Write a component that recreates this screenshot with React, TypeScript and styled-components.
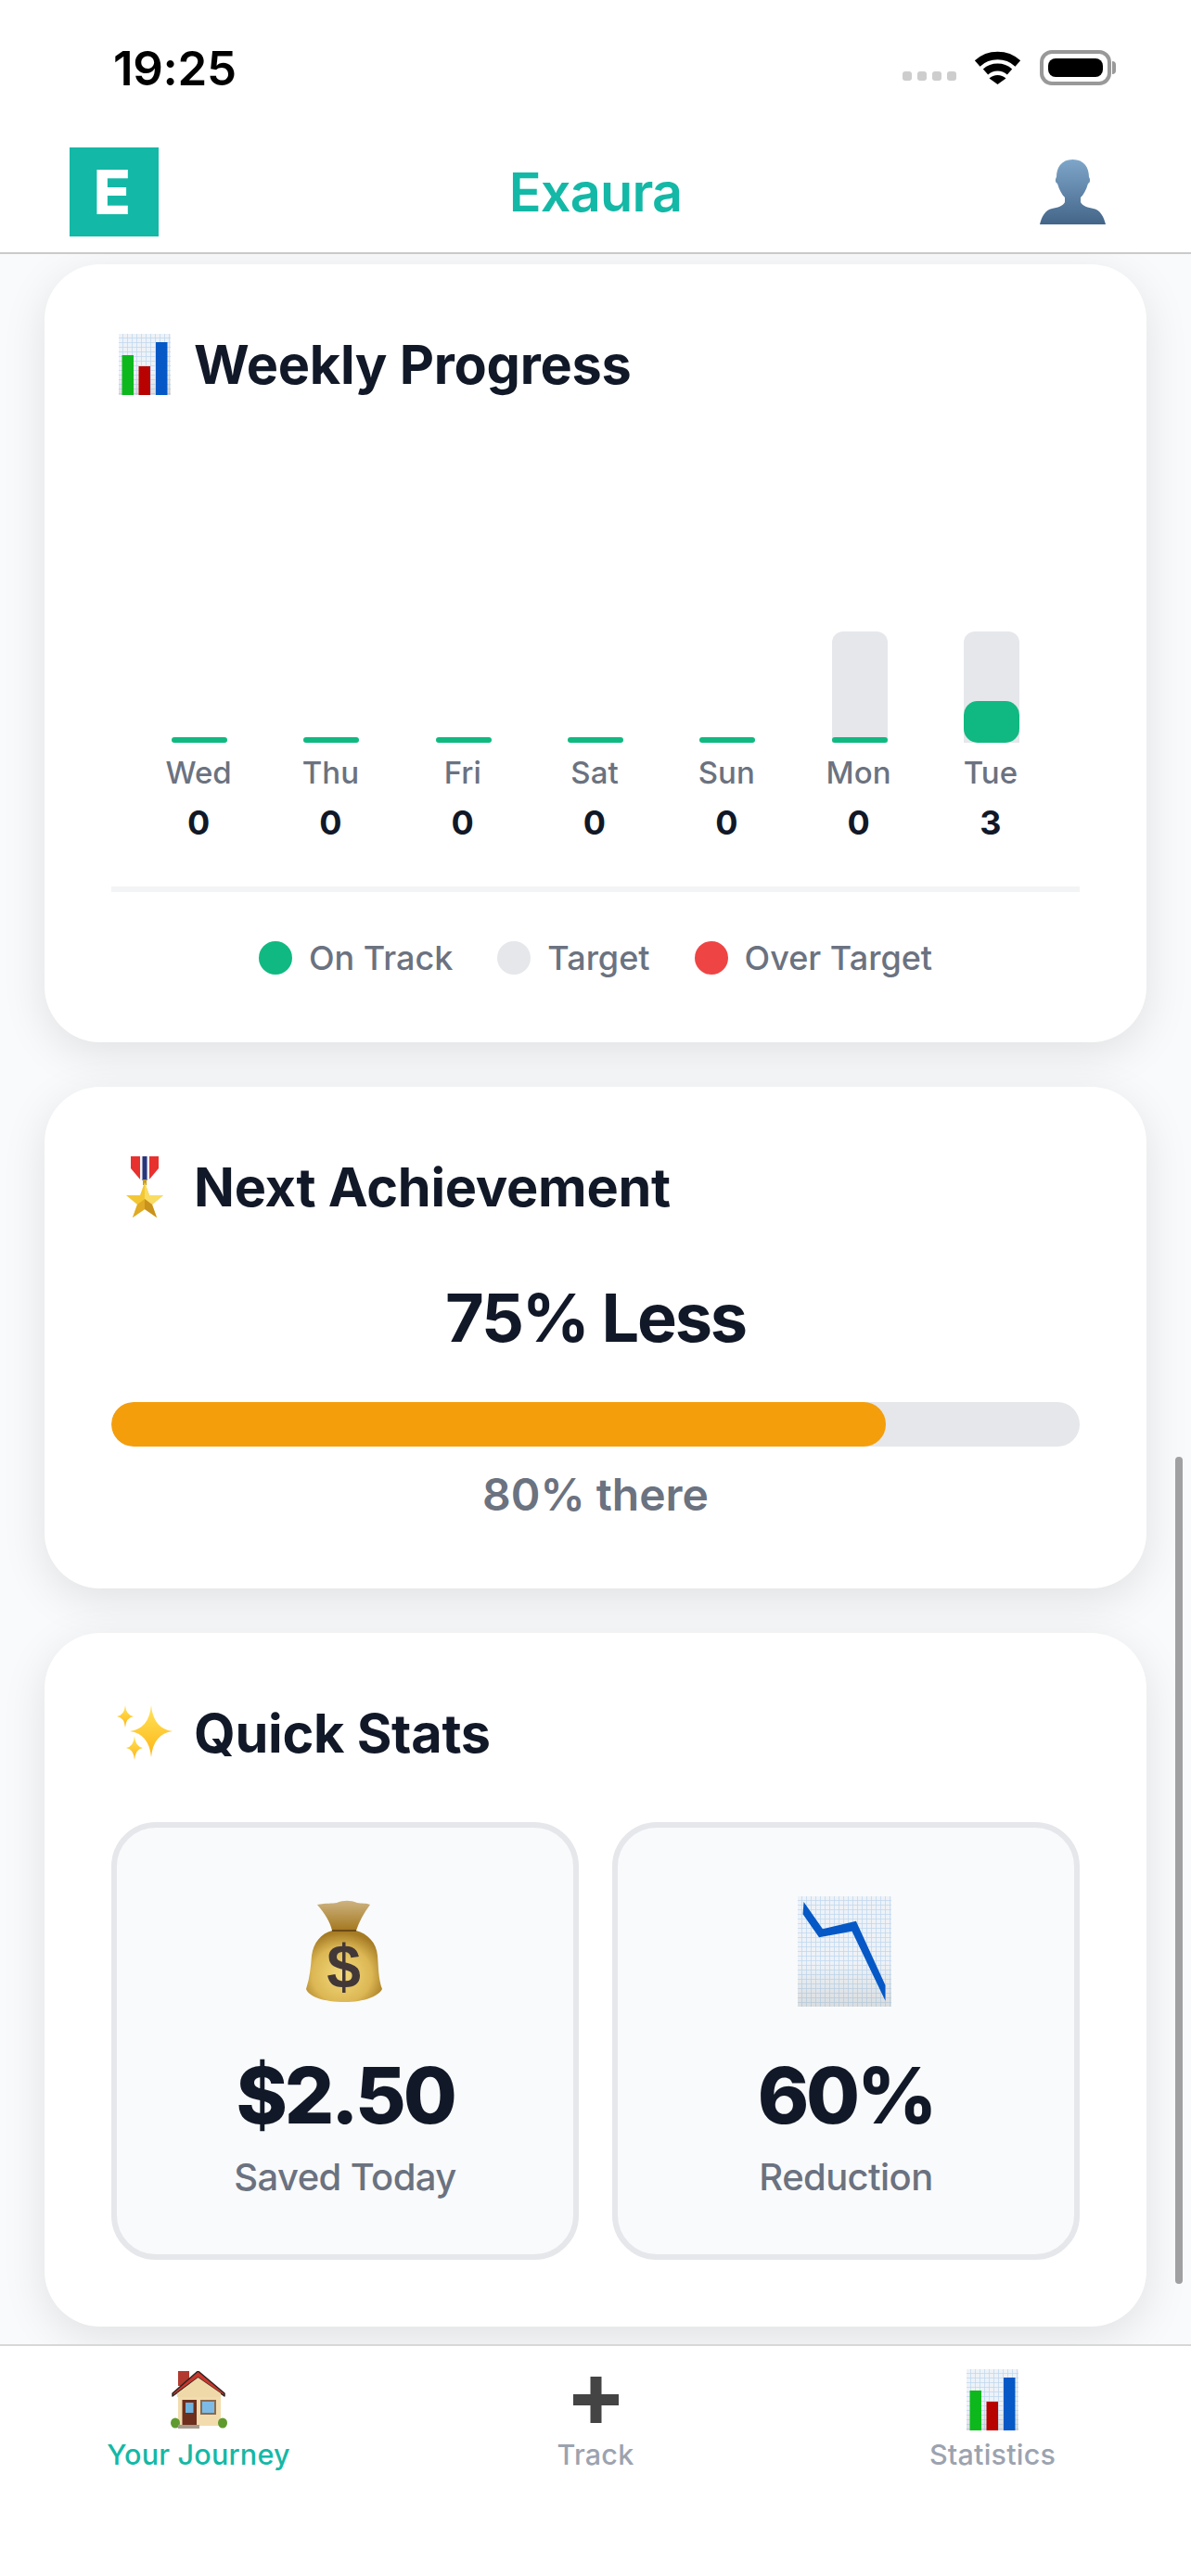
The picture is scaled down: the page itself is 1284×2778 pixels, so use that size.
import styled, { createGlobalStyle } from "styled-components";

const GlobalStyle = createGlobalStyle`
  html, body {
    margin: 0;
    padding: 0;
    background: #ffffff;
  }

  * {
    box-sizing: border-box;
  }
`;

const Page = styled.div`
  width: 1284px;
  height: 2778px;
  display: flex;
  flex-direction: column;
  overflow: hidden;
  background: #ffffff;
  font-family: Inter, "Noto Sans", sans-serif;
`;

const StatusBar = styled.div`
  height: 146px;
  padding: 0 86px 0 122px;
  display: flex;
  align-items: center;
  justify-content: space-between;
`;

const Clock = styled.div`
  font-size: 51px;
  font-weight: 600;
  letter-spacing: -0.3px;
  color: #000000;
`;

const StatusIcons = styled.div`
  display: flex;
  align-items: center;
`;

const Dots = styled.div`
  display: flex;
  gap: 6px;
  margin: 18px 19px 0 0;

  > span {
    width: 10px;
    height: 10px;
    border-radius: 3px;
    background: #cdcdcd;
  }
`;

const Battery = styled.div`
  width: 77px;
  height: 38px;
  margin-left: 20px;
  padding: 5px;
  border: 4px solid #999999;
  border-radius: 13px;
  position: relative;

  &::before {
    content: "";
    display: block;
    height: 100%;
    background: #000000;
    border-radius: 8px;
  }

  &::after {
    content: "";
    position: absolute;
    top: 8px;
    right: -9px;
    width: 4px;
    height: 14px;
    background: #999999;
    border-radius: 0 4px 4px 0;
  }
`;

const Header = styled.header`
  padding: 13px 75px 17px;
  display: grid;
  grid-template-columns: 1fr auto 1fr;
  align-items: center;
  background: #ffffff;
  border-bottom: 2px solid #cacaca;
`;

const Logo = styled.div`
  width: 96px;
  height: 96px;
  padding-right: 4px;
  background: #14b8a6;
  color: #ffffff;
  font-size: 66px;
  font-weight: 800;
  line-height: 96px;
  text-align: center;
`;

const Brand = styled.div`
  font-size: 57.6px;
  font-weight: 600;
  letter-spacing: -0.8px;
  color: #14b8a6;
`;

const Avatar = styled.div`
  justify-self: end;
  margin-right: 17px;
  display: flex;
`;

const Main = styled.main`
  flex: 1;
  min-height: 0;
  padding: 11px 48px 0;
  display: flex;
  flex-direction: column;
  gap: 48px;
  overflow: hidden;
  position: relative;
  background: #f9fafb;
`;

const Scrollbar = styled.div`
  position: absolute;
  top: 1297px;
  right: 9px;
  width: 8px;
  height: 892px;
  border-radius: 4px;
  background: #a0a0a3;
`;

const Card = styled.section`
  padding: 72px;
  background: #ffffff;
  border-radius: 60px;
  box-shadow: 0 12px 48px rgba(0, 0, 0, 0.1);
`;

const CardTitle = styled.h2`
  margin: 0;
  height: 72px;
  display: flex;
  align-items: center;
  font-size: 57.6px;
  font-weight: 700;
  letter-spacing: -0.25px;
  color: #111827;
`;

const TitleIcon = styled.span`
  width: 72px;
  margin-right: 17px;
  display: flex;
  justify-content: center;
`;

const Chart = styled.div`
  margin-top: 252px;
  padding: 0 24px 47px;
  display: grid;
  grid-template-columns: repeat(7, 1fr);
  border-bottom: 6px solid #f3f4f6;
`;

const Day = styled.div`
  display: flex;
  flex-direction: column;
  align-items: center;
`;

const Track = styled.div<{ $empty: boolean }>`
  width: 60px;
  height: 120px;
  display: flex;
  align-items: flex-end;
  border-radius: 12px 12px 0 0;
  background: ${(p) => (p.$empty ? "transparent" : "#e5e7eb")};
`;

const Fill = styled.div<{ $tall: boolean }>`
  width: 100%;
  background: #10b981;
  border-radius: ${(p) => (p.$tall ? "15px" : "3px")};
`;

const DayName = styled.div`
  margin: 12px 2px 0 0;
  font-size: 33px;
  line-height: 40px;
  font-weight: 500;
  color: #6b7280;
`;

const DayValue = styled.div`
  margin: 12px 2px 0 0;
  font-size: 36px;
  line-height: 44px;
  font-weight: 700;
  color: #111827;
`;

const Legend = styled.div`
  padding-top: 52px;
  display: flex;
  justify-content: center;
  gap: 48px;
`;

const LegendItem = styled.div`
  display: flex;
  align-items: center;
  gap: 18px;
  font-size: 36px;
  line-height: 38px;
  font-weight: 500;
  color: #6b7280;
`;

const Swatch = styled.span<{ $color: string }>`
  width: 36px;
  height: 36px;
  border-radius: 50%;
  background: ${(p) => p.$color};
`;

const Goal = styled.div`
  margin-top: 60px;
  font-size: 72px;
  line-height: 90px;
  font-weight: 700;
  letter-spacing: -2.2px;
  text-align: center;
  color: #111827;
`;

const Progress = styled.div`
  margin-top: 46px;
  height: 48px;
  border-radius: 24px;
  background: #e5e7eb;
  overflow: hidden;
`;

const ProgressFill = styled.div`
  height: 100%;
  background: #f59e0b;
  border-radius: 24px;
`;

const ProgressText = styled.div`
  margin-top: 23px;
  font-size: 48px;
  line-height: 58px;
  font-weight: 600;
  text-align: center;
  color: #6b7280;
`;

const StatGrid = styled.div`
  margin-top: 60px;
  display: grid;
  grid-template-columns: 1fr 1fr;
  gap: 36px;
`;

const StatBox = styled.div`
  height: 472px;
  padding-top: 73px;
  display: flex;
  flex-direction: column;
  align-items: center;
  background: #f9fafb;
  border: 6px solid #e5e7eb;
  border-radius: 48px;
`;

const StatIcon = styled.div`
  height: 120px;
  margin-right: 3px;
  display: flex;
  align-items: center;
`;

const StatValue = styled.div`
  margin-top: 45px;
  font-size: 84px;
  line-height: 102px;
  font-weight: 800;
  letter-spacing: -3.2px;
  color: #111827;
`;

const StatLabel = styled.div`
  margin-top: 13px;
  font-size: 40px;
  line-height: 48px;
  font-weight: 500;
  letter-spacing: -0.6px;
  color: #6b7280;
`;

const BottomNav = styled.nav`
  height: 250px;
  padding-top: 25px;
  display: grid;
  grid-template-columns: repeat(3, 1fr);
  align-items: start;
  background: #ffffff;
  border-top: 2px solid #d8d8d8;
`;

const NavItem = styled.div<{ $active?: boolean }>`
  display: flex;
  flex-direction: column;
  align-items: center;
  font-size: 30.5px;
  line-height: 36px;
  font-weight: 500;
  letter-spacing: 0.2px;
  color: ${(p) => (p.$active ? "#14b8a6" : "#9ca3af")};
`;

const NavIcon = styled.div`
  height: 66px;
  margin-bottom: 8px;
  display: flex;
  align-items: center;
`;

const Wifi = () => (
  <svg width="51" height="37" viewBox="0 0 51 37">
    <path d="M3.7 13.5A32.5 32.5 0 0 1 47.3 13.5" fill="none" stroke="#000" strokeWidth="8.5" />
    <path d="M12.5 22.5A19.5 19.5 0 0 1 38.5 22.5" fill="none" stroke="#000" strokeWidth="8" />
    <path d="M16.5 30.5A13 13 0 0 1 34.5 30.5L25.5 37Z" fill="#000" transform="translate(0 -1)" />
  </svg>
);

const Person = () => (
  <svg width="71" height="70" viewBox="0 0 71 70">
    <defs>
      <linearGradient id="bust" x1="0" y1="0" x2="0" y2="1">
        <stop offset="0" stopColor="#7ea6c9" />
        <stop offset="1" stopColor="#436588" />
      </linearGradient>
    </defs>
    <path
      fill="url(#bust)"
      d="M35.5 0C48 0 53 9 53 19C55 22 54 25 52 26C50 33 47 38 44 41L44 46C46 50 52 52 58 53C65 54 69 62 71 70L0 70C2 62 6 54 13 53C19 52 25 50 27 46L27 41C24 38 21 33 19 26C17 25 16 22 18 19C18 9 23 0 35.5 0Z"
    />
  </svg>
);

const GraphPaper = ({ id, w, h }: { id: string; w: number; h: number }) => (
  <>
    <defs>
      <pattern id={id} width="5" height="5" patternUnits="userSpaceOnUse">
        <rect width="5" height="5" fill="#eef2f7" />
        <path d="M5 0V5M0 5H5" stroke="#bfd8ef" strokeWidth="1.5" />
      </pattern>
      <linearGradient id={`${id}Fade`} x1="0" y1="0" x2="0" y2="1">
        <stop offset="0.6" stopColor="#8a8a80" stopOpacity="0" />
        <stop offset="1" stopColor="#8a8a80" stopOpacity="0.2" />
      </linearGradient>
    </defs>
    <rect width={w} height={h} fill={`url(#${id})`} />
    <rect width={w} height={h} fill={`url(#${id}Fade)`} />
  </>
);

const BarsEmoji = ({ id }: { id: string }) => (
  <svg width="56" height="66" viewBox="0 0 56 66">
    <GraphPaper id={id} w={56} h={66} />
    <rect x="3.5" y="23" width="12.5" height="43" fill="#0db81d" />
    <rect x="21.5" y="35" width="12.5" height="31" fill="#b80202" />
    <rect x="40" y="9" width="12.5" height="57" fill="#0558c6" />
  </svg>
);

const MedalEmoji = () => (
  <svg width="40" height="66" viewBox="0 0 40 66">
    <path d="M5 0H35V13L24 26H16L5 13Z" fill="#e8302f" />
    <rect x="15" y="0" width="10" height="26" fill="#f4f4f4" />
    <rect x="17.5" y="0" width="5" height="26" fill="#27357a" />
    <rect x="18" y="25" width="4" height="6" fill="#c99a1e" />
    <path d="M20 28L25 42L40 42L28 52L33 66L20 57L7 66L12 52L0 42L15 42Z" fill="#f3c734" />
    <path d="M20 28L25 42L40 42L28 52L20 46Z" fill="#f9dc63" />
    <path d="M20 46L28 52L33 66L20 57Z" fill="#c9921c" />
    <path d="M20 46L20 57L7 66L12 52Z" fill="#e0aa25" />
  </svg>
);

const SparkPath = ({ cx, cy, rx, ry }: { cx: number; cy: number; rx: number; ry: number }) => (
  <path
    fill="url(#spark)"
    d={`M${cx} ${cy - ry}Q${cx + rx * 0.1} ${cy - ry * 0.1} ${cx + rx} ${cy}Q${cx + rx * 0.1} ${cy + ry * 0.1} ${cx} ${cy + ry}Q${cx - rx * 0.1} ${cy + ry * 0.1} ${cx - rx} ${cy}Q${cx - rx * 0.1} ${cy - ry * 0.1} ${cx} ${cy - ry}Z`}
  />
);

const SparklesEmoji = () => (
  <svg width="60" height="60" viewBox="0 0 60 60">
    <defs>
      <linearGradient id="spark" x1="0" y1="0" x2="0" y2="1">
        <stop offset="0" stopColor="#ffe45c" />
        <stop offset="1" stopColor="#fdb515" />
      </linearGradient>
    </defs>
    <SparkPath cx={37} cy={28} rx={23} ry={28} />
    <SparkPath cx={9} cy={12} rx={9} ry={12} />
    <SparkPath cx={19} cy={46} rx={9} ry={13} />
  </svg>
);

const MoneyBagEmoji = () => (
  <svg width="82" height="110" viewBox="0 0 82 110">
    <defs>
      <linearGradient id="neck" x1="0" y1="0" x2="0" y2="1">
        <stop offset="0" stopColor="#cdb381" />
        <stop offset="1" stopColor="#a4781e" />
      </linearGradient>
      <radialGradient id="sack" cx="0.47" cy="0.62" r="0.6">
        <stop offset="0" stopColor="#f3da7c" />
        <stop offset="0.65" stopColor="#dcb754" />
        <stop offset="1" stopColor="#a57b24" />
      </radialGradient>
    </defs>
    <path d="M12 5C22 3 28 4 33 3C40 0 48 0 55 3C60 4 65 3 69 5C62 14 57 24 54 33H28C26 24 20 14 12 5Z" fill="url(#neck)" />
    <path d="M28 33C16 36 8 46 6 60C5 72 4 84 0 96C3 104 18 110 42 110C62 110 78 104 82 96C78 86 78 72 77 60C76 46 66 36 54 33Z" fill="url(#sack)" />
    <rect x="28" y="32" width="26" height="2" fill="#6b4a16" />
    <text x="40.5" y="95" fontFamily="Liberation Sans, sans-serif" fontSize="66" fontWeight="700" textAnchor="middle" fill="#423838">
      $
    </text>
  </svg>
);

const FallingChartEmoji = () => (
  <svg width="101" height="119" viewBox="0 0 101 119">
    <GraphPaper id="paperDown" w={101} h={119} />
    <path d="M6.5 6L26.9 35.3L62.9 26.7L94.5 96V112.7L58.5 37.7L23 44.3L5.6 19.3Z" fill="#0558c6" />
  </svg>
);

const HouseEmoji = () => (
  <svg width="63" height="62" viewBox="0 0 63 62">
    <rect x="9" y="0" width="12" height="16" fill="#b23a2e" />
    <rect x="9" y="20" width="46" height="39" fill="#f2dcae" />
    <path d="M30.5 0L59 24V27L30.5 7L3 27V24Z" fill="#c8372d" stroke="#2d2320" strokeWidth="1.5" strokeLinejoin="round" />
    <path d="M30.5 7L55 24V28H8V24Z" fill="#f0d9a8" />
    <rect x="13.5" y="31" width="15.5" height="27" fill="#6e2f1c" />
    <rect x="17" y="34" width="8.5" height="11" fill="#6fb3e0" />
    <rect x="33" y="31" width="17" height="16" fill="#8b6a50" />
    <rect x="35" y="33" width="13" height="12" fill="#7dbbe6" />
    <ellipse cx="6" cy="56" rx="5" ry="5.5" fill="#5f9a2e" />
    <ellipse cx="57" cy="56" rx="5" ry="5.5" fill="#5f9a2e" />
    <rect x="9" y="58" width="23" height="4" fill="#a79b8c" />
  </svg>
);

const PlusEmoji = () => (
  <svg width="49" height="50" viewBox="0 0 49 50">
    <path d="M18.5 0H30.5V19H49V31H30.5V50H18.5V31H0V19H18.5Z" fill="#444444" />
  </svg>
);

const days = [
  { name: "Wed", value: 0, hasTarget: false },
  { name: "Thu", value: 0, hasTarget: false },
  { name: "Fri", value: 0, hasTarget: false },
  { name: "Sat", value: 0, hasTarget: false },
  { name: "Sun", value: 0, hasTarget: false },
  { name: "Mon", value: 0, hasTarget: true },
  { name: "Tue", value: 3, hasTarget: true },
];

const legend = [
  { label: "On Track", color: "#10b981" },
  { label: "Target", color: "#e5e7eb" },
  { label: "Over Target", color: "#ef4444" },
];

const App = () => {
  return (
    <Page>
      <GlobalStyle />
      <StatusBar>
        <Clock>19:25</Clock>
        <StatusIcons>
          <Dots>
            <span />
            <span />
            <span />
            <span />
          </Dots>
          <Wifi />
          <Battery />
        </StatusIcons>
      </StatusBar>

      <Header>
        <Logo>E</Logo>
        <Brand>Exaura</Brand>
        <Avatar>
          <Person />
        </Avatar>
      </Header>

      <Main>
        <Card>
          <CardTitle>
            <TitleIcon>
              <BarsEmoji id="paperTitle" />
            </TitleIcon>
            Weekly Progress
          </CardTitle>
          <Chart>
            {days.map((day) => (
              <Day key={day.name}>
                <Track $empty={!day.hasTarget}>
                  <Fill $tall={day.value > 0} style={{ height: day.value > 0 ? day.value * 15 : 6 }} />
                </Track>
                <DayName>{day.name}</DayName>
                <DayValue>{day.value}</DayValue>
              </Day>
            ))}
          </Chart>
          <Legend>
            {legend.map((item) => (
              <LegendItem key={item.label}>
                <Swatch $color={item.color} />
                {item.label}
              </LegendItem>
            ))}
          </Legend>
        </Card>

        <Card>
          <CardTitle>
            <TitleIcon>
              <MedalEmoji />
            </TitleIcon>
            Next Achievement
          </CardTitle>
          <Goal>75% Less</Goal>
          <Progress>
            <ProgressFill style={{ width: "80%" }} />
          </Progress>
          <ProgressText>80% there</ProgressText>
        </Card>

        <Card>
          <CardTitle>
            <TitleIcon>
              <SparklesEmoji />
            </TitleIcon>
            Quick Stats
          </CardTitle>
          <StatGrid>
            <StatBox>
              <StatIcon>
                <MoneyBagEmoji />
              </StatIcon>
              <StatValue>$2.50</StatValue>
              <StatLabel>Saved Today</StatLabel>
            </StatBox>
            <StatBox>
              <StatIcon>
                <FallingChartEmoji />
              </StatIcon>
              <StatValue>60%</StatValue>
              <StatLabel>Reduction</StatLabel>
            </StatBox>
          </StatGrid>
        </Card>

        <Scrollbar />
      </Main>

      <BottomNav>
        <NavItem $active>
          <NavIcon>
            <HouseEmoji />
          </NavIcon>
          Your Journey
        </NavItem>
        <NavItem>
          <NavIcon>
            <PlusEmoji />
          </NavIcon>
          Track
        </NavItem>
        <NavItem>
          <NavIcon>
            <BarsEmoji id="paperNav" />
          </NavIcon>
          Statistics
        </NavItem>
      </BottomNav>
    </Page>
  );
};

export default App;
